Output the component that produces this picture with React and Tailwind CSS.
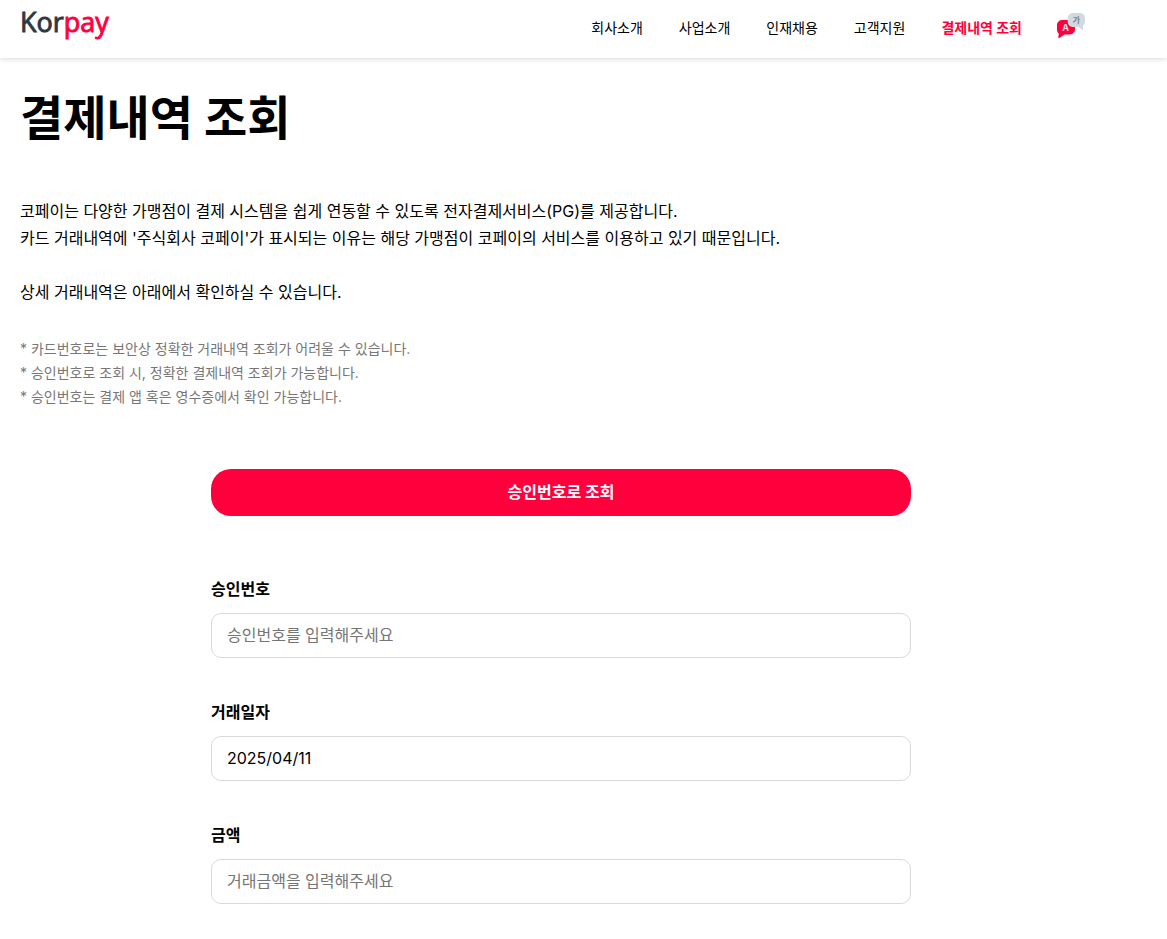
const NAV_ITEMS = ['회사소개', '사업소개', '인재채용', '고객지원'];

const NOTES = [
  '* 카드번호로는 보안상 정확한 거래내역 조회가 어려울 수 있습니다.',
  '* 승인번호로 조회 시, 정확한 결제내역 조회가 가능합니다.',
  '* 승인번호는 결제 앱 혹은 영수증에서 확인 가능합니다.',
];

const FIELDS = [
  { id: 'approval', label: '승인번호', placeholder: '승인번호를 입력해주세요' },
  { id: 'date', label: '거래일자', defaultValue: '2025/04/11' },
  { id: 'amount', label: '금액', placeholder: '거래금액을 입력해주세요' },
];

function Logo() {
  return (
    <svg width="96" height="44" viewBox="0 0 96 44" role="img" aria-label="Korpay">
      <text x="0" y="31" fontSize="27" fontFamily="'Open Sans', sans-serif" strokeWidth="0.9">
        <tspan fill="#2d383f" stroke="#2d383f">Kor</tspan>
        <tspan fill="#ff003c" stroke="#ff003c">pay</tspan>
      </text>
    </svg>
  );
}

function LanguageIcon() {
  return (
    <svg width="30" height="27" viewBox="0 0 30 27" aria-hidden="true">
      <path
        d="M6 8h8a5 5 0 0 1 5 5v4.500a5 5 0 0 1-5 5H8.500L3.500 26c-.6.4-1.300 0-1.200-.7l.5-3.600A5 5 0 0 1 1 17.500V13a5 5 0 0 1 5-5Z"
        fill="#ff003c"
      />
      <path
        d="M16.500 1H24a5 5 0 0 1 5 5v4a5 5 0 0 1-2.200 4.100l.4 3.200c.1.700-.6 1-1.100.6L22.500 15h-6a4.700 4.700 0 0 1-4.700-4.700V6a5 5 0 0 1 4.700-5Z"
        fill="#d1dade"
      />
      <text x="9.500" y="18.500" textAnchor="middle" fontSize="9" fontWeight="700" fill="#ffe0e6" fontFamily="Inter, sans-serif">
        A
      </text>
      <text x="20.500" y="11" textAnchor="middle" fontSize="8" fontWeight="700" fill="#7b8387" fontFamily="'Noto Sans CJK KR', sans-serif">
        가
      </text>
    </svg>
  );
}

function Header() {
  return (
    <header className="flex h-[58px] items-center justify-between bg-white pr-[81px] pl-5 shadow-[0_1px_6px_rgba(0,0,0,0.15)]">
      <a href="#" className="-mt-3">
        <Logo />
      </a>
      <nav className="-mt-0.5 flex items-center gap-9 text-sm">
        {NAV_ITEMS.map((item) => (
          <a key={item} href="#">
            {item}
          </a>
        ))}
        <a href="#" className="font-bold text-[#ff003c]" aria-current="page">
          결제내역 조회
        </a>
        <button type="button" aria-label="언어 선택" className="-mt-1.5 -ml-0.5">
          <LanguageIcon />
        </button>
      </nav>
    </header>
  );
}

function Field({ id, label, ...inputProps }) {
  return (
    <div>
      <label htmlFor={id} className="block leading-6 font-bold">
        {label}
      </label>
      <input
        id={id}
        type="text"
        className="mt-3 block h-[45px] w-full rounded-[10px] border border-[#d9d9d9] px-[15px] pb-0.5 text-black placeholder:text-[#757575]"
        {...inputProps}
      />
    </div>
  );
}

export default function App() {
  return (
    <div className="bg-white font-[Inter,'Noto_Sans_CJK_KR',sans-serif] text-base text-black">
      <Header />
      <main className="pt-[25px] pr-[65px] pb-9 pl-5">
        <h1 className="text-[47px] leading-[70px] font-bold">결제내역 조회</h1>
        <p className="mt-[45px] leading-[27px]">
          코페이는 다양한 가맹점이 결제 시스템을 쉽게 연동할 수 있도록 전자결제서비스(PG)를 제공합니다.
          <br />
          카드 거래내역에 '주식회사 코페이'가 표시되는 이유는 해당 가맹점이 코페이의 서비스를 이용하고 있기 때문입니다.
          <br />
          <br />
          상세 거래내역은 아래에서 확인하실 수 있습니다.
        </p>
        <ul className="mt-[31px] text-sm leading-6 text-[#777]">
          {NOTES.map((note) => (
            <li key={note}>{note}</li>
          ))}
        </ul>
        <form className="mx-auto mt-[60px] max-w-[700px]">
          <button type="button" className="block h-[47px] w-full rounded-[20px] bg-[#ff003c] pb-0.5 font-bold text-white">
            승인번호로 조회
          </button>
          <div className="mt-[61px] flex flex-col gap-[42px]">
            {FIELDS.map((field) => (
              <Field key={field.id} {...field} />
            ))}
          </div>
        </form>
      </main>
    </div>
  );
}
